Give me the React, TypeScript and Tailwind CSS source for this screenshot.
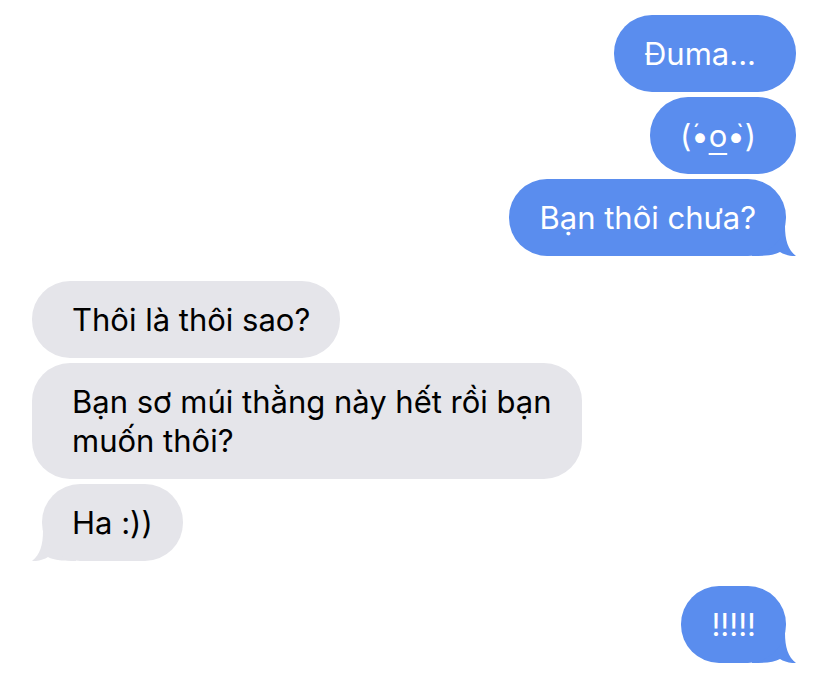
import React from "react";

type Side = "me" | "them";

function Tail({ side, color }: { side: Side; color: string }) {
  return (
    <svg
      width="44"
      height="30"
      viewBox="0 0 44 30"
      className={
        side === "me"
          ? "absolute right-0 bottom-0"
          : "absolute left-0 bottom-0 -scale-x-100"
      }
    >
      <path
        d="M0 0 L33 0 C33 14 36 24 44 30 C38 30.5 32 28.5 28 26 C22 29.5 12 30 0 30 Z"
        fill={color}
      />
    </svg>
  );
}

function Bubble({
  side,
  tail = false,
  children,
}: {
  side: Side;
  tail?: boolean;
  children: React.ReactNode;
}) {
  const me = side === "me";
  const body = me
    ? tail
      ? "mr-[10px] pl-[30px] pr-[30px] bg-[#5a8dee] text-white"
      : "pl-[30px] pr-[40px] bg-[#5a8dee] text-white"
    : tail
      ? "ml-[10px] pl-[30px] pr-[30px] bg-[#e5e5ea] text-black"
      : "pl-[40px] pr-[30px] bg-[#e5e5ea] text-black";

  return (
    <div className={me ? "flex justify-end" : "flex justify-start"}>
      <div className="relative">
        {tail && <Tail side={side} color={me ? "#5a8dee" : "#e5e5ea"} />}
        <div
          className={`relative h-[77px] rounded-[38px] py-[19px] text-[31px] leading-[39px] ${body}`}
        >
          {children}
        </div>
      </div>
    </div>
  );
}

// kaomoji eye: dot with a small tick above it
function Eye({ flip }: { flip?: boolean }) {
  return (
    <span className="relative">
      •
      <span
        className={`absolute top-[5px] text-[24px] leading-none ${flip ? "right-[1px]" : "left-[1px]"}`}
      >
        {flip ? "ˋ" : "ˊ"}
      </span>
    </span>
  );
}

export default function App() {
  return (
    <div
      className="min-h-[686px] w-[828px] bg-white px-[32px] pt-[15px]"
      style={{ fontFamily: "Inter, 'Noto Sans', 'Liberation Sans', sans-serif" }}
    >
      <div className="flex flex-col gap-[5px]">
        <Bubble side="me">Đuma...</Bubble>
        <Bubble side="me">
          (<Eye />
          <span className="underline decoration-[2px] underline-offset-[6px]">o</span>
          <Eye flip />)
        </Bubble>
        <Bubble side="me" tail>
          Bạn thôi chưa?
        </Bubble>
      </div>

      <div className="mt-[25px] flex flex-col gap-[5px]">
        <Bubble side="them">Thôi là thôi sao?</Bubble>
        <div className="flex justify-start">
          <div className="rounded-[38px] bg-[#e5e5ea] py-[19px] pl-[40px] pr-[30px] text-[31px] leading-[39px] text-black">
            Bạn sơ múi thằng này hết rồi bạn
            <br />
            muốn thôi?
          </div>
        </div>
        <Bubble side="them" tail>
          Ha :))
        </Bubble>
      </div>

      <div className="mt-[25px] flex flex-col gap-[5px]">
        <Bubble side="me" tail>
          !!!!!
        </Bubble>
      </div>
    </div>
  );
}
